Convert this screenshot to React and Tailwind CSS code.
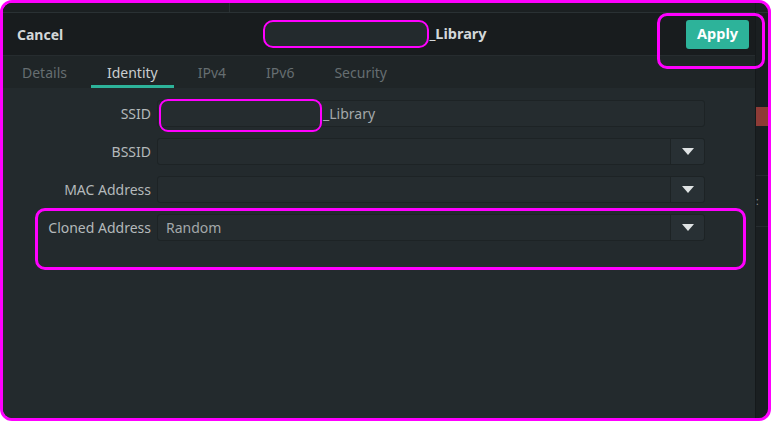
import React from "react";

const tabs = ["Details", "Identity", "IPv4", "IPv6", "Security"];

function Caret() {
  return (
    <svg width="12" height="7" viewBox="0 0 12 7">
      <path d="M0 0 L12 0 L6 7 Z" fill="#dfe3e4" />
    </svg>
  );
}

function Field({ label, value, combo, ssid }) {
  return (
    <>
      <div className="text-right text-[14px] text-[#b4b9bb] leading-[27px]">{label}</div>
      <div className="relative h-[27px] flex rounded-[3px] border border-[#1d2325] bg-[#252c2f]">
        <div className="flex-1 flex items-center pl-[8px] text-[14px] text-[#a3a8aa]">
          {ssid ? <span className="pl-[157px]">_Library</span> : value}
        </div>
        {combo && (
          <div className="w-[34px] flex items-center justify-center border-l border-[#1d2325] bg-[#283034] rounded-r-[3px]">
            <Caret />
          </div>
        )}
        {ssid && (
          <div className="absolute left-[1px] top-[-2px] w-[163px] h-[33px] rounded-[9px] border-2 border-[#f0f]" />
        )}
      </div>
    </>
  );
}

export default function App() {
  return (
    <div className="w-[771px] h-[421px] bg-white" style={{ fontFamily: '"Noto Sans", sans-serif' }}>
      <div className="relative w-full h-full rounded-[12px] border-[3px] border-[#f0f] overflow-hidden flex bg-[#1a1f21]">
        {/* Main window */}
        <div className="w-[753px] flex flex-col bg-[#232a2d] border-r border-[#15191b]">
          {/* top strip */}
          <div className="h-[10px] bg-[#1b2022] border-b border-[#2a3134] flex">
            <div className="w-[227px] border-r border-[#2a3134]" />
          </div>

          {/* Header */}
          <div className="h-[42px] bg-[#181c1e] grid grid-cols-[1fr_auto_1fr] items-center pl-[14px] pr-[6px]">
            <div className="text-[14px] font-bold text-[#d3d7d9]">Cancel</div>
            <div className="flex items-center mr-[16px]">
              <span className="w-[166px] h-[28px] rounded-[10px] border-2 border-[#f0f] bg-[#232a2d]" />
              <span className="text-[14.5px] font-bold text-[#d3d7d9]">_Library</span>
            </div>
            <div className="flex justify-end">
              <button className="h-[29px] w-[63px] rounded-[3px] bg-[#2db39a] text-white text-[14.5px] font-bold">
                Apply
              </button>
            </div>
          </div>

          {/* Tabs */}
          <div className="h-[33px] bg-[#1f2527] border-t border-[#262c2f] flex gap-2 px-[3px]">
            {tabs.map((t) => (
              <div
                key={t}
                className={
                  t === "Identity"
                    ? "px-4 flex items-center text-[14px] text-[#c9cdcf] border-b-[3px] border-[#2db39a] pt-[3px]"
                    : "px-4 flex items-center text-[14px] text-[#666e71]"
                }
              >
                {t}
              </div>
            ))}
          </div>

          {/* Body */}
          <div className="flex-1 pt-[12px] pr-[50px]">
            <div className="grid grid-cols-[148px_1fr] gap-x-[6px] gap-y-[11px]">
              <Field label="SSID" ssid />
              <Field label="BSSID" combo />
              <Field label="MAC Address" combo />
              <Field label="Cloned Address" value="Random" combo />
            </div>
          </div>
        </div>

        {/* Background window strip */}
        <div className="flex-1 flex flex-col">
          <div className="h-[10px] border-b border-[#2a3134]" />
          <div className="h-[94px]" />
          <div className="h-[19px] bg-[#8e3b36]" />
          <div className="h-[50px] border-b border-[#262c2f]" />
          <div className="h-[50px] flex items-center text-[10px] text-[#8a9092]">:</div>
          <div className="h-[28px] border-t border-[#262c2f]" />
        </div>

        {/* Annotation overlays */}
        <div className="absolute left-[654px] top-[10px] w-[108px] h-[56px] rounded-[10px] border-[3px] border-[#f0f]" />
        <div className="absolute left-[32px] top-[205px] w-[711px] h-[62px] rounded-[10px] border-[3px] border-[#f0f]" />
      </div>
    </div>
  );
}
